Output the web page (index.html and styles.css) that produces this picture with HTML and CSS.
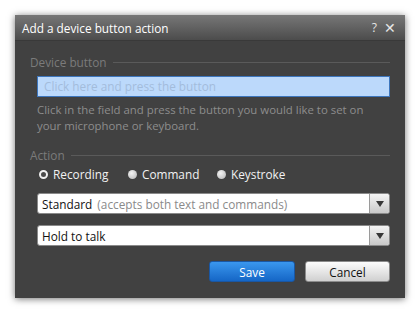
FILE: index.html
```html
<!DOCTYPE html>
<html lang="en">
<head>
    <meta charset="UTF-8">
    <title>Add a device button action</title>
    <link rel="stylesheet" href="styles.css">
</head>
<body>
    <div class="dialog">
        <div class="titlebar">
            <span class="title">Add a device button action</span>
            <span class="controls"><span class="help">?</span><span class="close">&#x2715;</span></span>
        </div>

        <div class="content">
            <div class="group-label"><span>Device button</span></div>
            <div class="capture">Click here and press the button</div>
            <p class="hint">Click in the field and press the button you would like to set on your microphone or keyboard.</p>

            <div class="group-label action"><span>Action</span></div>
            <div class="radios">
                <label class="radio"><span class="dot checked"></span>Recording</label>
                <label class="radio"><span class="dot"></span>Command</label>
                <label class="radio"><span class="dot"></span>Keystroke</label>
            </div>

            <div class="select">
                <span class="value">Standard <span class="note">(accepts both text and commands)</span></span>
                <span class="arrow"></span>
            </div>
            <div class="select">
                <span class="value">Hold to talk</span>
                <span class="arrow"></span>
            </div>

            <div class="buttons">
                <button class="btn primary">Save</button>
                <button class="btn">Cancel</button>
            </div>
        </div>
    </div>
</body>
</html>
```

FILE: styles.css
```css
body { margin: 0; padding: 15px; background: #ffffff; font-family: "Open Sans", "Noto Sans", sans-serif; font-size: 11.5px; }
.dialog { width: 390px; height: 283px; background: #414141; box-shadow: 0 1px 7px rgba(0,0,0,0.55); }
.titlebar { height: 25px; display: flex; align-items: center; justify-content: space-between; padding: 0 9px 0 7px; background: linear-gradient(#777777, #4c4c4c); border-bottom: 1px solid #393939; color: #ffffff; }
.title { font-size: 11.8px; }
.controls { display: flex; align-items: center; gap: 7px; color: #e6e6e6; }
.help { font-size: 12px; }
.close { font-size: 14px; }
.content { padding: 13px 15px 0 15px; }
.group-label { display: flex; align-items: center; gap: 6px; height: 16px; color: #7b7b7b; font-size: 11.8px; }
.group-label::after { content: ""; flex: 1; border-top: 1px solid #5a5a5a; }
.group-label.action { margin-top: 13px; }
.capture { margin: 6px 0 0 7px; height: 19px; line-height: 19px; padding: 0 6px; background: #bcd9fb; border: 1px solid #3d76bd; color: #a3bcdb; font-size: 11.8px; }
.hint { margin: 5px 0 0 7px; line-height: 16px; color: #8d8d8d; font-size: 11.4px; }
.radios { display: flex; margin: 3px 0 0 9px; height: 16px; align-items: center; }
.radio { display: flex; align-items: center; width: 89px; color: #f2f2f2; font-size: 11.8px; }
.dot { width: 9px; height: 9px; border-radius: 50%; margin-right: 5px; box-sizing: border-box; background: radial-gradient(circle at 40% 35%, #f4f4f4, #b4b4b4); }
.dot.checked { background: #4a4a4a; border: 2px solid #f0f0f0; }
.select { display: flex; align-items: center; margin: 11px 0 0 7px; height: 21px; box-sizing: border-box; background: #ffffff; border: 1px solid #8a8a8a; border-radius: 3px; }
.value { flex: 1; padding-left: 4px; color: #111111; font-size: 11.8px; }
.note { color: #8a8a8a; margin-left: 2px; }
.arrow { width: 19px; height: 19px; border-left: 1px solid #9a9a9a; border-radius: 0 2px 2px 0; background: linear-gradient(#f4f4f4, #c9c9c9); display: flex; align-items: center; justify-content: center; }
.arrow::after { content: ""; border-left: 4px solid transparent; border-right: 4px solid transparent; border-top: 6px solid #383838; }
.buttons { display: flex; justify-content: flex-end; gap: 10px; margin-top: 15px; }
.btn { width: 85px; height: 21px; padding: 0; border: 1px solid #8c8c8c; border-radius: 3px; background: linear-gradient(#fdfdfd, #d0d0d0); color: #111111; font-family: "Open Sans", "Noto Sans", sans-serif; font-size: 11.8px; }
.btn.primary { width: 86px; border-color: #1a57a3; background: linear-gradient(#3a97ee, #1566c6); color: #ffffff; }
```
